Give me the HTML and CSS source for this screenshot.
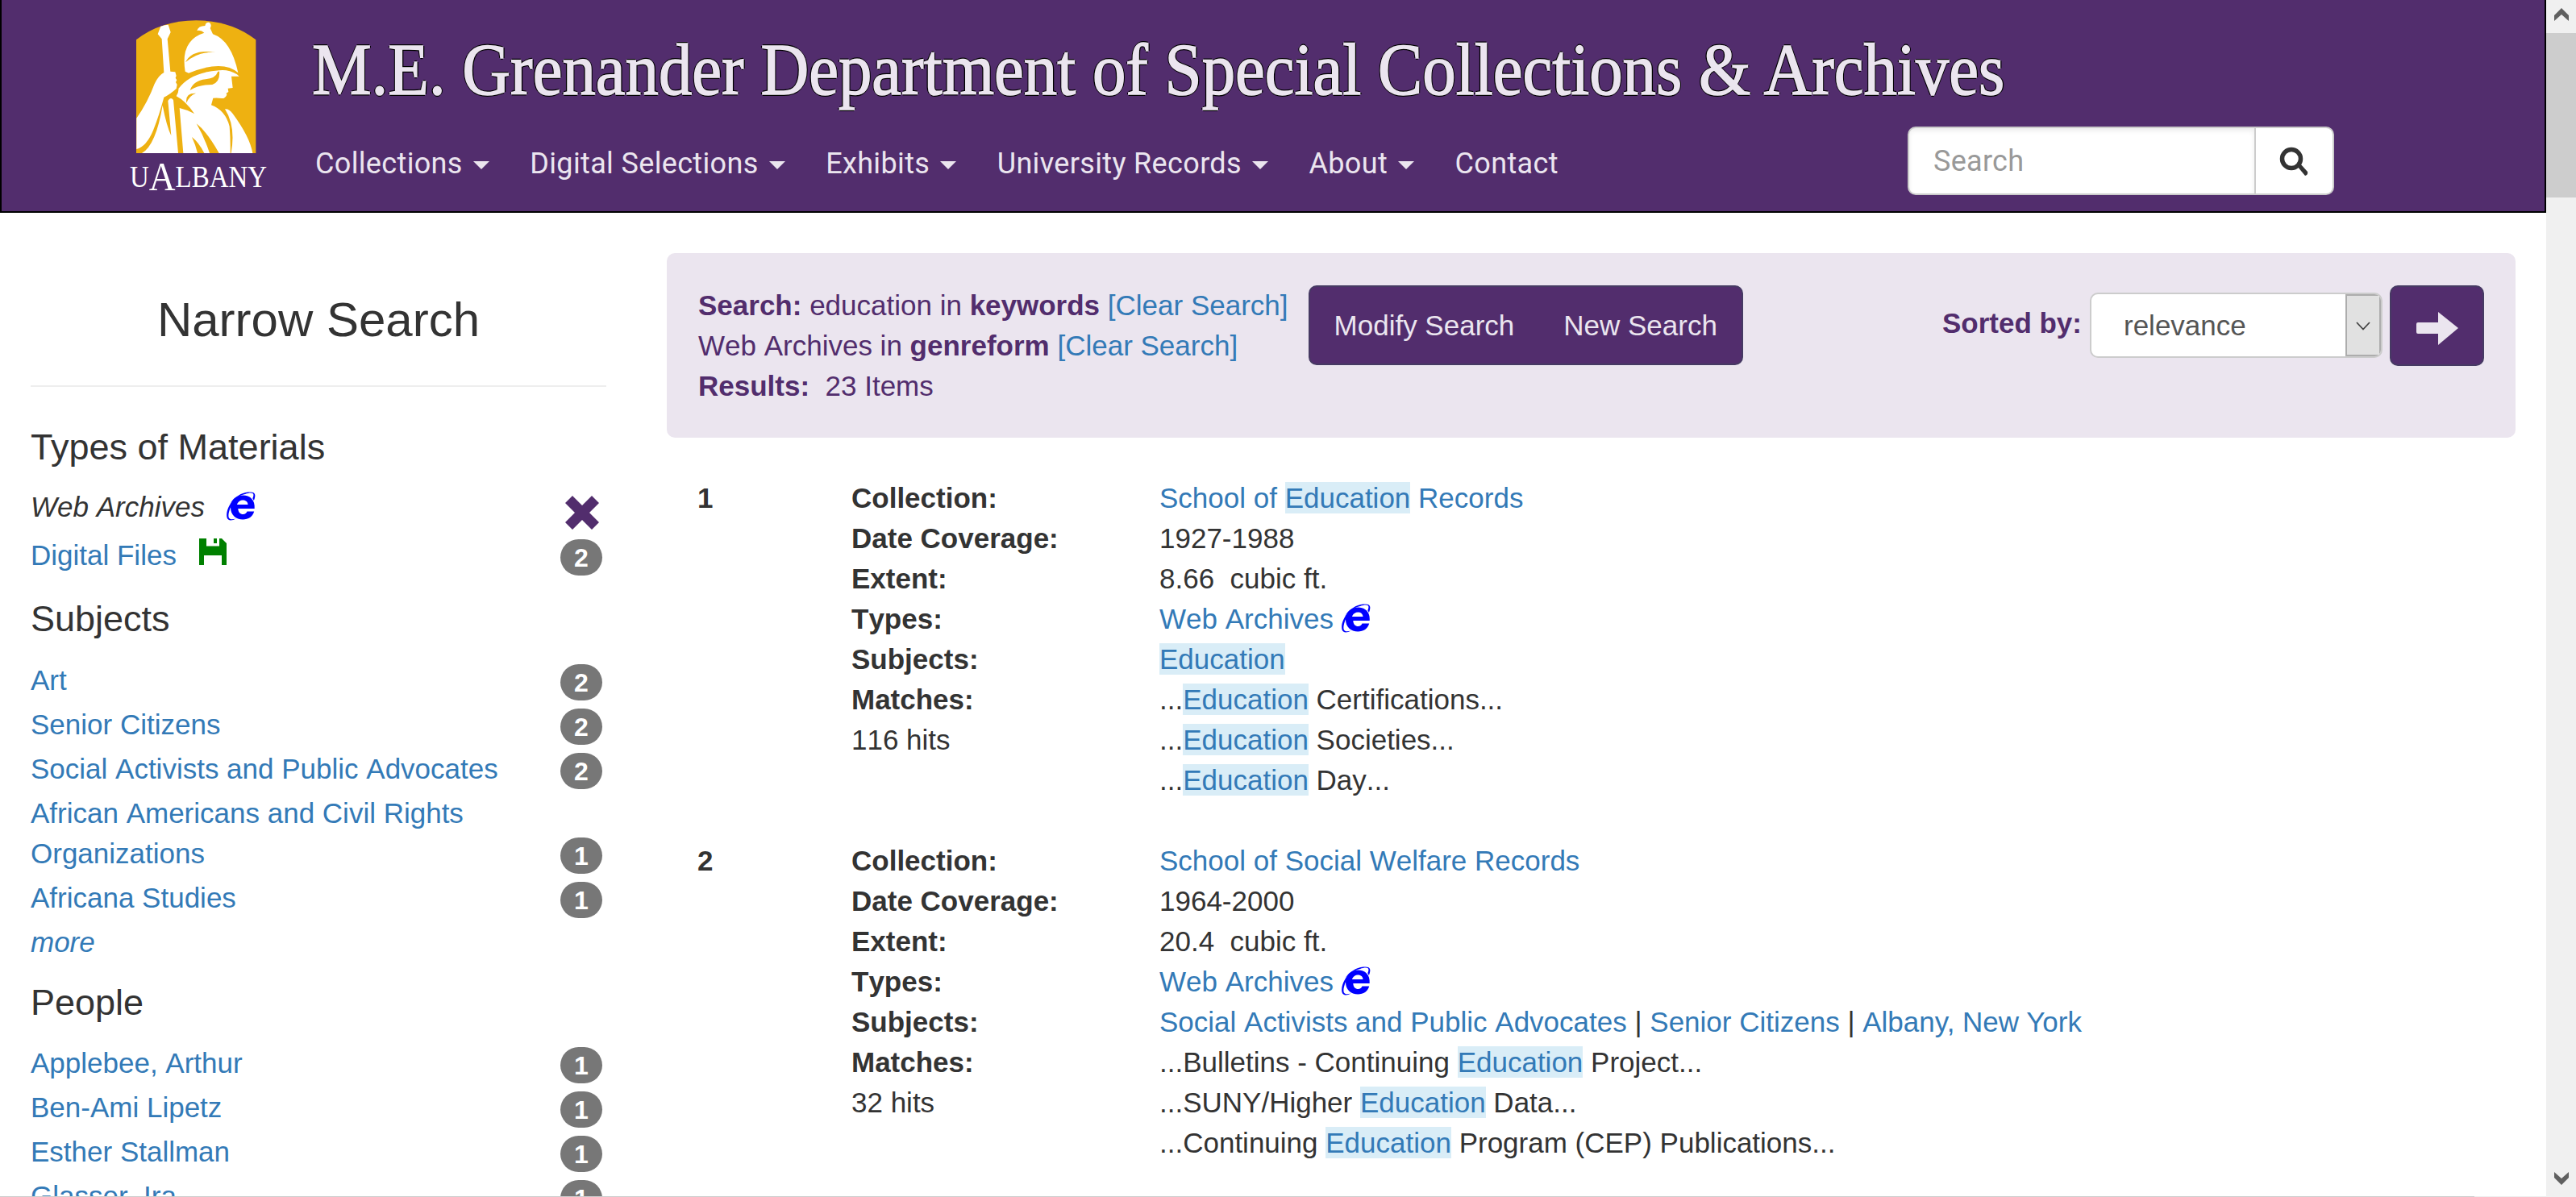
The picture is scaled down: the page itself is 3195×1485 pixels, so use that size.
FILE: index.html
```html
<!DOCTYPE html>
<html lang="en">
<head>
<meta charset="utf-8">
<title>M.E. Grenander Department of Special Collections &amp; Archives</title>
<link rel="stylesheet" href="styles.css">
</head>
<body>
<svg class="defs" aria-hidden="true">
  <symbol id="ie" viewBox="0 0 36 36">
    <path d="M10.800 21 H34.700 C35.600 10 29 4.500 20.500 4.500 C11 4.500 5 11 5 19.500 C5 28.500 11.500 34.500 20.300 34.500 C27 34.500 32.500 31 34.200 24.500 H25.500 C24.500 26.800 23 28 20.500 28 C17 28 14.500 25.500 14.300 21 Z M13 16 C14 12.500 17 10.500 20.500 10.500 C24 10.500 26.300 12.800 26.500 16 Z" fill-rule="evenodd"/>
    <path d="M10.500 8 C5 13 -1.500 24 0.500 32 C1.500 36.500 7 36 11.500 33.500 C8 34.500 4 35 2.700 32 C1.300 27 5 18 10.500 8 Z"/>
    <path d="M4 15 C9 7.500 18 1 27 0.500 C32 0 35 1 35.300 4 C35.500 6 35 8.500 33.800 11 C33.500 10 32.800 9 32.300 8.300 C33.500 5.800 33.900 3.500 32.700 2.300 C31 1 27 1.500 23 3 C15 5 10 8 4 15 Z"/>
  </symbol>
</svg>
<div class="window">
  <div class="page">
    <div class="content">
    <header class="banner">
      <svg class="logo" viewBox="140 10 210 240" role="img" aria-label="UAlbany">
        <g transform="translate(140 10) scale(.33333)">
          <path fill="#eeb111" d="M87 118 Q180 46 310 46 Q440 46 532 118 V540 H87Z"/>
          <path fill="#fff" d="M178 68 Q195 62 206 62 L215 90 L203 115 L214 236 L232 238 L236 252 L233 260 L238 268 L234 276 L239 285 L236 300 Q212 322 190 332 Q172 400 150 455 Q125 515 88 525 V410 Q130 350 155 282 Q170 250 190 240 L182 115 L167 97Z"/>
          <path fill="#fff" d="M313 84 Q318 66 343 66 Q345 52 358 53 Q370 60 362 75 L372 97 Q440 120 466 241 Q410 190 282 242 L269 236 Q250 120 340 92 Q328 80 313 84Z"/>
          <path fill="#fff" d="M236 328 Q246 312 244 300 Q290 238 396 232 Q430 228 462 247 L470 254 L441 254 L446 297 L428 299 L430 312 L422 317 L424 323 Q416 338 405 336 Q388 333 373 335 L366 361 Q418 380 434 440 Q438 490 437 540 H395 Q350 460 311 430 Q340 480 360 540 H340 Q320 500 294 480 Q308 510 315 540 H262 L248 372 Q275 378 303 393 Q270 345 236 328Z"/>
          <path fill="#fff" d="M417 376 Q432 374 446 393 Q510 480 520 540 H440 Q458 440 417 376Z M185 362 Q200 440 217 475 L205 345 Q215 328 225 342 L243 540 H108 Q160 510 185 362Z"/>
          <path fill="#eeb111" d="M270 202 Q295 150 383 165 Q320 160 270 202Z M287 306 Q300 270 345 265 Q382 262 390 238 L396 235 Q400 275 370 285 Q320 285 287 306Z M274 353 Q268 315 309 317 Q285 325 274 353Z"/>
        </g>
        <text class="wordmark" x="161" y="232" textLength="170" lengthAdjust="spacingAndGlyphs">U<tspan class="tall" dy="4">A</tspan><tspan dy="-4">LBANY</tspan></text>
      </svg>
      <div class="banner-main">
        <h1 class="title">M.E. Grenander Department of Special Collections &amp; Archives</h1>
        <div class="bar">
          <nav class="nav">
            <a class="drop">Collections</a><a class="drop">Digital Selections</a><a class="drop">Exhibits</a><a class="drop">University Records</a><a class="drop">About</a><a>Contact</a>
          </nav>
          <div class="search">
            <div class="search-input">Search</div>
            <div class="search-btn"><svg width="38" height="38" viewBox="0 0 38 38"><circle cx="15" cy="15" r="11.500" fill="none" stroke="#333" stroke-width="5.500"/><path d="M22 24 L26 21 L35 31 Q36 35 32 36Z" fill="#333"/></svg></div>
          </div>
        </div>
      </div>
    </header>
    <div class="columns">
      <aside class="side">
        <h2>Narrow Search</h2>
        <h3>Types of Materials</h3>
        <div class="facet active"><em>Web Archives</em><svg class="ico gap" ><use href="#ie"/></svg><svg class="remove" viewBox="0 0 42 42"><path d="M9 0 L21 12 L33 0 L42 9 L30 21 L42 33 L33 42 L21 30 L9 42 L0 33 L12 21 L0 9Z"/></svg></div>
        <div class="facet files"><a>Digital Files</a><svg class="floppy" viewBox="0 0 34 33"><path d="M0 0 H9 V9.500 H25 V0 H28 L34 6 V33 H28 V21 H6 V33 H0Z M18 0 H22 V6 H18Z"/></svg><span class="badge">2</span></div>
        <h3 class="next">Subjects</h3>
        <div class="facet"><a>Art</a><span class="badge">2</span></div>
        <div class="facet"><a>Senior Citizens</a><span class="badge">2</span></div>
        <div class="facet"><a>Social Activists and Public Advocates</a><span class="badge">2</span></div>
        <div class="facet"><a>African Americans and Civil Rights Organizations</a><span class="badge">1</span></div>
        <div class="facet"><a>Africana Studies</a><span class="badge">1</span></div>
        <div class="facet"><a><em>more</em></a></div>
        <h3 class="next people">People</h3>
        <div class="facet"><a>Applebee, Arthur</a><span class="badge">1</span></div>
        <div class="facet"><a>Ben-Ami Lipetz</a><span class="badge">1</span></div>
        <div class="facet"><a>Esther Stallman</a><span class="badge">1</span></div>
        <div class="facet"><a>Glasser, Ira</a><span class="badge">1</span></div>
      </aside>
      <main class="main">
        <section class="panel">
          <div class="query">
            <div><b>Search:</b> education in <b>keywords</b> <a>[Clear Search]</a></div>
            <div>Web Archives in <b>genreform</b> <a>[Clear Search]</a></div>
            <div><b>Results:</b>&nbsp; 23 Items</div>
          </div>
          <div class="buttons"><span>Modify Search</span><span>New Search</span></div>
          <div class="sort">
            <b>Sorted by:</b>
            <div class="select"><span>relevance</span><i><svg width="18" height="16" viewBox="0 0 18 16"><path d="M1 4 L9 12.500 L17 4" fill="none" stroke="#444" stroke-width="1.800"/></svg></i></div>
            <div class="go"><svg width="52" height="42" viewBox="0 0 52 42"><path d="M2 14 H27 V1 L52 21 L27 42 V28 H2 Q0 28 0 26 V16 Q0 14 2 14Z" fill="#ebe5ef"/></svg></div>
          </div>
        </section>
        <article class="result">
          <b>1</b>
          <dl>
            <dt>Collection:</dt><dd><a>School of <mark>Education</mark> Records</a></dd>
            <dt>Date Coverage:</dt><dd>1927-1988</dd>
            <dt>Extent:</dt><dd>8.66&nbsp; cubic ft.</dd>
            <dt>Types:</dt><dd><a>Web Archives</a><svg class="ico"><use href="#ie"/></svg></dd>
            <dt>Subjects:</dt><dd><a><mark>Education</mark></a></dd>
            <dt>Matches:</dt><dd>...<mark>Education</mark> Certifications...</dd>
            <dt class="hits">116 hits</dt><dd>...<mark>Education</mark> Societies...</dd>
            <dt></dt><dd>...<mark>Education</mark> Day...</dd>
          </dl>
        </article>
        <article class="result">
          <b>2</b>
          <dl>
            <dt>Collection:</dt><dd><a>School of Social Welfare Records</a></dd>
            <dt>Date Coverage:</dt><dd>1964-2000</dd>
            <dt>Extent:</dt><dd>20.4&nbsp; cubic ft.</dd>
            <dt>Types:</dt><dd><a>Web Archives</a><svg class="ico"><use href="#ie"/></svg></dd>
            <dt>Subjects:</dt><dd><a>Social Activists and Public Advocates</a> | <a>Senior Citizens</a> | <a class="kerned">Albany, New York</a></dd>
            <dt>Matches:</dt><dd>...Bulletins - Continuing <mark>Education</mark> Project...</dd>
            <dt class="hits">32 hits</dt><dd>...SUNY/Higher <mark>Education</mark> Data...</dd>
            <dt></dt><dd>...Continuing <mark>Education</mark> Program (CEP) Publications...</dd>
          </dl>
        </article>
      </main>
    </div>
    </div>
    <div class="hscroll"><div class="hthumb"></div></div>
  </div>
  <div class="scrollbar">
    <svg width="18" height="16" viewBox="0 0 18 16"><path d="M0 9 L9 0 L18 9 V16 L9 8 L0 16Z"/></svg>
    <div class="thumb"></div>
    <svg class="down" width="18" height="16" viewBox="0 0 18 16"><path d="M0 7 L9 16 L18 7 V0 L9 8 L0 0Z"/></svg>
  </div>
</div>
</body>
</html>
```
FILE: styles.css
```css
* { box-sizing: border-box; }
body { margin: 0; background: #fff; color: #333; font: 35px/50px "Liberation Sans", Arial, sans-serif; font-kerning: none; overflow: hidden; }
.defs { position: absolute; width: 0; height: 0; }
.window { display: flex; width: 3195px; height: 1485px; overflow: hidden; }
.page { display: flex; flex-direction: column; width: 3158px; height: 1485px; }
.content { flex: 1; min-height: 0; overflow: hidden; }
.hscroll { height: 1px; background: #eee; }
.hthumb { width: 3069px; height: 1px; background: #cdcdcd; }
a, mark { color: #337ab7; }
mark { background: #d9edf7; }
.kerned { font-kerning: normal; }

.banner { display: flex; height: 264px; background: #522d6d; border: 2px solid #000; border-top: 0; }
.logo { width: 210px; height: 240px; margin: 10px 0 0 138px; flex: none; }
.wordmark { font: 37px "Liberation Serif", serif; fill: #fff; }
.wordmark .tall { font-size: 51px; }
.banner-main { flex: 1; min-width: 0; padding-left: 37px; color: #ebe5ef; }
.title { margin: 0; padding-top: 34px; height: 158px; font: 90px/106px Georgia, "Liberation Serif", serif; font-kerning: normal; white-space: nowrap;
  transform: scaleX(.92); transform-origin: 0 0;
  -webkit-text-stroke: 1.5px #ebe5ef;
  text-shadow: -2px 0 #000, 2px 0 #000, 0 -2px #000, 0 2px #000; }
.bar { display: flex; justify-content: space-between; }
.nav { display: flex; padding: 20px 0 0 4px; gap: 50.5px; font: 36px/50px Roboto, sans-serif; font-kerning: normal; letter-spacing: .35px; white-space: nowrap; }
.nav a { color: #ebe5ef; }
.drop::after { content: ""; display: inline-block; margin-left: 13px; vertical-align: 5px; border: 10px solid transparent; border-top-color: #ebe5ef; border-bottom: 0; }
.search { display: flex; width: 529px; height: 85px; margin: -1px 261px 0 0; background: #fff; border: 2px solid #ccc; border-radius: 10px; overflow: hidden; }
.search-input { flex: 1; padding-left: 30px; font: 36px/83px Roboto, sans-serif; letter-spacing: .3px; color: #999; box-shadow: inset 0 3px 6px rgba(0,0,0,.08); }
.search-btn { width: 97px; border-left: 2px solid #ccc; display: flex; align-items: center; justify-content: center; padding-top: 3px; }

.columns { display: flex; }
.side { width: 752px; padding: 99px 0 0 38px; }
h2 { width: 714px; height: 117px; margin: 0 0 36px; border-bottom: 2px solid #eee; text-align: center; font: 60px/68px "Liberation Sans", sans-serif; }
h3 { margin: 0; height: 88px; font: 45px/78px "Liberation Sans", sans-serif; }
h3.next { height: 90px; margin-top: 15px; }
h3.people { height: 89px; margin-top: 11px; }
.facet { display: flex; align-items: flex-end; width: 709px; line-height: 50px; }
.facet + .facet { margin-top: 5px; }
.facet > a { width: 600px; }
.facet.active + .facet { margin-top: 10px; }
.badge { margin-left: auto; width: 52px; height: 45px; border-radius: 24px; background: #777; color: #fff; font-weight: bold; font-size: 32px; line-height: 46px; text-align: center; }
.ico { width: 36px; height: 36px; fill: #00f; margin-left: 10px; vertical-align: -5px; }
.facet .gap { margin: 0 0 8px 27px; }
.remove { width: 42px; height: 42px; margin: 0 4px -3px auto; fill: #522d6d; }
.floppy { width: 34px; height: 33px; margin: 0 0 13px 28px; fill: #008000; }
.facet.files > a { width: auto; }

.main { width: 2293px; margin-left: 75px; padding-top: 50px; }
.panel { display: flex; height: 229px; margin-bottom: 50px; padding: 40px 39px 0 39px; background: #ebe5ef; border-radius: 10px; color: #522d6d; white-space: nowrap; }
.buttons { display: flex; gap: 1px; height: 99px; margin-left: 25px; background: #522d6d; border: 2px solid #463a63; border-radius: 10px; color: #ebe5ef; line-height: 95px; }
.buttons span { padding: 0 30px; }
.sort { display: flex; margin-left: auto; }
.sort b { line-height: 94px; }
.select { display: flex; width: 363px; height: 81px; margin: 9px 9px 0 10px; padding-left: 40px; background: #fff; border: 2px solid #ccc; border-radius: 10px; color: #555; line-height: 78px; overflow: hidden; }
.select i { width: 44px; margin-left: auto; background: #e1e1e1; border: 2px solid #adadad; display: flex; align-items: center; justify-content: center; }
.go { width: 117px; height: 100px; padding-top: 5px; background: #522d6d; border: 2px solid #463a63; border-radius: 10px; display: flex; align-items: center; justify-content: center; }
.result { display: flex; height: 450px; padding-left: 38px; }
.result > b { width: 191px; }
dl { display: grid; grid-template-columns: 382px auto; grid-auto-rows: 50px; margin: 0; white-space: nowrap; }
dt { font-weight: bold; }
dt.hits { font-weight: normal; }
dd { margin: 0; }

.scrollbar { width: 37px; background: #f0f0f0; display: flex; flex-direction: column; align-items: center; padding: 10px 0 15px; fill: #606060; }
.thumb { width: 37px; height: 204px; margin-top: 15px; background: #cdcdcd; }
.down { margin-top: auto; }
```
